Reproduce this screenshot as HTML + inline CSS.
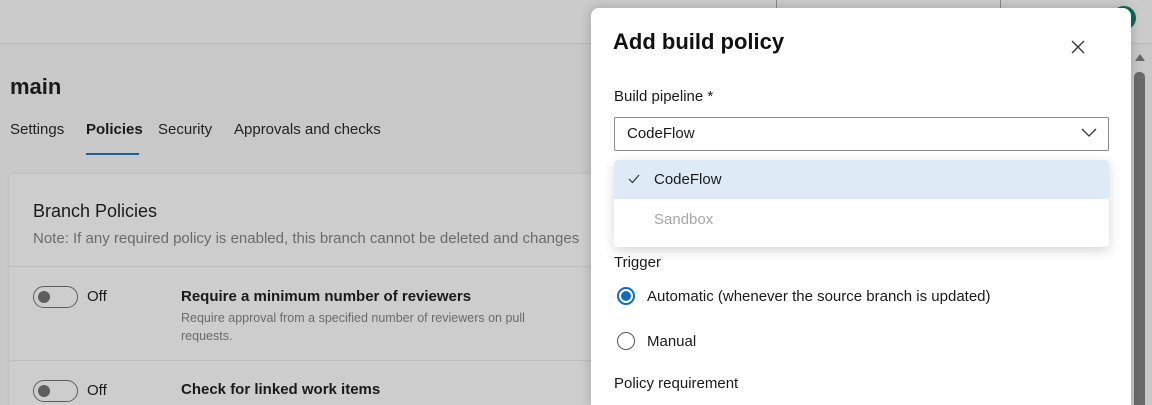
<!DOCTYPE html>
<html style="width:1152px;height:405px;overflow:hidden"><head><style>
*{margin:0;padding:0;box-sizing:border-box}
body{width:1152px;height:405px;overflow:hidden;background:#c8c8c8;font-family:"Segoe UI","Liberation Sans",sans-serif;color:#1a1a1a;position:relative}
.a{position:absolute;white-space:nowrap}
.tog{position:absolute;width:45px;height:22px;border:1px solid #5e5e5e;border-radius:11px}
.tog::after{content:"";position:absolute;left:4px;top:4px;width:12px;height:12px;border-radius:50%;background:#5e5e5e}
</style></head><body>
<div class="a" style="left:0;top:0;width:1152px;height:44px;background:#cbcbcb;border-bottom:1px solid #b8b8b8"></div>
<div class="a" style="left:776px;top:0;width:225px;height:9px;border:1px solid #8a8a8a;border-top:none;background:#cbcbcb"></div>
<div class="a" style="left:1112px;top:6px;width:24px;height:24px;border-radius:50%;background:#0b6a57"></div>
<div class="a" style="left:10px;top:74px;font-size:22px;font-weight:600">main</div>
<div class="a" style="left:10px;top:121px;font-size:15px;color:#222">Settings</div>
<div class="a" style="left:86px;top:121px;font-size:15px;font-weight:600">Policies</div>
<div class="a" style="left:86px;top:153px;width:53px;height:2px;background:#1d5f99"></div>
<div class="a" style="left:158px;top:121px;font-size:15px;color:#222">Security</div>
<div class="a" style="left:234px;top:121px;font-size:15px;color:#222">Approvals and checks</div>
<div class="a" style="left:9px;top:174px;width:600px;height:240px;background:#cdcdcd;border-radius:4px;box-shadow:0 0 2px rgba(0,0,0,.1)"></div>
<div class="a" style="left:33px;top:201px;font-size:18px">Branch Policies</div>
<div class="a" style="left:33px;top:230px;font-size:15px;color:#6b6b6b">Note: If any required policy is enabled, this branch cannot be deleted and changes</div>
<div class="a" style="left:9px;top:266px;width:600px;height:1px;background:#bdbdbd"></div>
<div class="tog" style="left:33px;top:286px"></div>
<div class="a" style="left:87px;top:288px;font-size:15px">Off</div>
<div class="a" style="left:181px;top:288px;font-size:15px;font-weight:600">Require a minimum number of reviewers</div>
<div class="a" style="left:181px;top:309px;font-size:12.5px;color:#6b6b6b;line-height:18px;white-space:normal;width:380px">Require approval from a specified number of reviewers on pull requests.</div>
<div class="a" style="left:9px;top:360px;width:600px;height:1px;background:#bdbdbd"></div>
<div class="tog" style="left:33px;top:380px"></div>
<div class="a" style="left:87px;top:382px;font-size:15px">Off</div>
<div class="a" style="left:181px;top:381px;font-size:15px;font-weight:600">Check for linked work items</div>
<div class="a" style="left:1131px;top:45px;width:21px;height:360px;background:#c8c8c8"></div>
<div class="a" style="left:1135px;top:54px;width:0;height:0;border-left:5px solid transparent;border-right:5px solid transparent;border-bottom:7px solid #666"></div>
<div class="a" style="left:1134px;top:72px;width:11px;height:333px;border-radius:5px 5px 0 0;background:#6a6a6a"></div>
<div class="a" style="left:591px;top:8px;width:540px;height:397px;background:#fff;border-radius:8px 8px 0 0;box-shadow:0 0 12px rgba(0,0,0,.2)"></div>
<div class="a" style="left:613px;top:29px;font-size:22px;font-weight:600;color:#111">Add build policy</div>
<svg class="a" style="left:1071px;top:40px" width="14" height="14"><path d="M1 1L13 13M13 1L1 13" stroke="#333" stroke-width="1.3"/></svg>
<div class="a" style="left:614px;top:88px;font-size:15px">Build pipeline *</div>
<div class="a" style="left:614px;top:117px;width:495px;height:34px;border:1px solid #8a8a8a;border-radius:2px"></div>
<div class="a" style="left:627px;top:125px;font-size:15px">CodeFlow</div>
<svg class="a" style="left:1081px;top:128px" width="16" height="10"><path d="M1 1L8 8L15 1" stroke="#333" stroke-width="1.3" fill="none"/></svg>
<div class="a" style="left:614px;top:160px;width:495px;height:87px;background:#fff;border-radius:4px;box-shadow:0 4px 12px rgba(0,0,0,.16)"></div>
<div class="a" style="left:614px;top:160px;width:495px;height:39px;background:#deebf7;border-radius:4px 4px 0 0"></div>
<svg class="a" style="left:628px;top:174px" width="12" height="10"><path d="M1 5L4.5 8.5L11 1" stroke="#333" stroke-width="1.2" fill="none"/></svg>
<div class="a" style="left:654px;top:171px;font-size:15px">CodeFlow</div>
<div class="a" style="left:654px;top:211px;font-size:15px;color:#a6a6a6">Sandbox</div>
<div class="a" style="left:614px;top:254px;font-size:15px">Trigger</div>
<div class="a" style="left:617px;top:287px;width:18px;height:18px;border-radius:50%;border:2px solid #0f6cbd"><div style="margin:2px;width:10px;height:10px;border-radius:50%;background:#0f6cbd"></div></div>
<div class="a" style="left:647px;top:288px;font-size:15px">Automatic (whenever the source branch is updated)</div>
<div class="a" style="left:617px;top:332px;width:18px;height:18px;border-radius:50%;border:1px solid #555"></div>
<div class="a" style="left:647px;top:333px;font-size:15px">Manual</div>
<div class="a" style="left:614px;top:375px;font-size:15px">Policy requirement</div>
</body></html>
